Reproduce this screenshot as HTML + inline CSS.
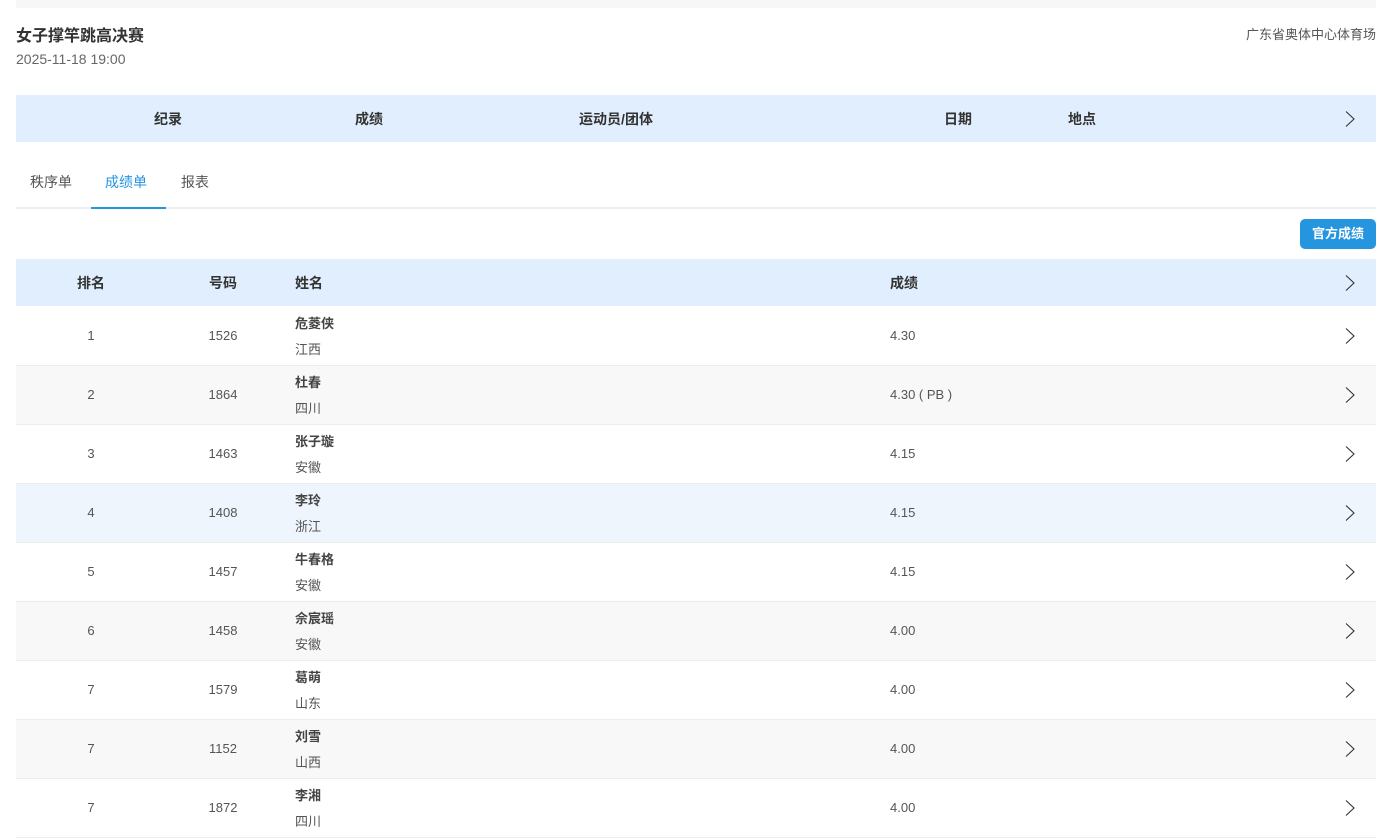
<!DOCTYPE html>
<html><head><meta charset="utf-8"><style>
*{margin:0;padding:0;box-sizing:border-box}
body{width:1392px;height:823px;overflow:hidden;background:#fff;font-family:"Liberation Sans","Noto Sans CJK SC",sans-serif;color:#333;position:relative}
.a{position:absolute}
.chev{position:absolute;left:1343px;width:14px;height:18px}
.hb{font-weight:bold;font-size:14px;color:#333}
.row{position:absolute;left:16px;width:1360px;height:59px;border-bottom:1px solid #ececec;font-size:13px;color:#555}
.c{position:absolute;transform:translateX(-50%)}
</style></head><body>
<div class="a" style="left:16px;top:0;width:1360px;height:8px;background:#f7f7f7"></div>
<div class="a" style="left:16px;top:22px;font-size:16px;font-weight:bold;color:#333">女子撑竿跳高决赛</div>
<div class="a" style="left:16px;top:51px;font-size:14px;color:#666">2025-11-18 19:00</div>
<div class="a" style="right:16px;top:24px;font-size:13px;color:#555">广东省奥体中心体育场</div>
<div class="a" style="left:16px;top:95px;width:1360px;height:47px;background:#e1eefd">
<span class="a c hb" style="left:152px;top:14px">纪录</span>
<span class="a c hb" style="left:353px;top:14px">成绩</span>
<span class="a c hb" style="left:600px;top:14px">运动员/团体</span>
<span class="a c hb" style="left:942px;top:14px">日期</span>
<span class="a c hb" style="left:1066px;top:14px">地点</span>
</div>
<svg class="chev" style="top:110px" viewBox="0 0 14 18"><path d="M3 1.5 L11 9 L3 16.5" fill="none" stroke="#333" stroke-width="1.1"/></svg>
<div class="a" style="left:16px;top:207px;width:1360px;height:2px;background:#ebeef4"></div>
<div class="a" style="left:91px;top:207px;width:75px;height:2px;background:#2695e0"></div>
<div class="a" style="left:30px;top:172px;font-size:14px;color:#555">秩序单</div>
<div class="a" style="left:105px;top:172px;font-size:14px;color:#2695e0">成绩单</div>
<div class="a" style="left:181px;top:172px;font-size:14px;color:#555">报表</div>
<div class="a" style="left:1300px;top:219px;width:76px;height:30px;background:#2695e0;border-radius:5px;color:#fff;font-size:13px;font-weight:bold;text-align:center;line-height:30px">官方成绩</div>
<div class="a" style="left:16px;top:259px;width:1360px;height:47px;background:#e1eefd">
<span class="a c hb" style="left:75px;top:14px">排名</span>
<span class="a c hb" style="left:207px;top:14px">号码</span>
<span class="a hb" style="left:279px;top:14px">姓名</span>
<span class="a hb" style="left:874px;top:14px">成绩</span>
</div>
<svg class="chev" style="top:274px" viewBox="0 0 14 18"><path d="M3 1.5 L11 9 L3 16.5" fill="none" stroke="#333" stroke-width="1.1"/></svg>
<div id="rows"></div>
<script>
var d=[["1","1526","危菱侠","江西","4.30","#fff"],["2","1864","杜春","四川","4.30 ( PB )","#f8f8f8"],["3","1463","张子璇","安徽","4.15","#fff"],["4","1408","李玲","浙江","4.15","#eef5fd"],["5","1457","牛春格","安徽","4.15","#fff"],["6","1458","佘宸瑶","安徽","4.00","#f8f8f8"],["7","1579","葛萌","山东","4.00","#fff"],["7","1152","刘雪","山西","4.00","#f8f8f8"],["7","1872","李湘","四川","4.00","#fff"]];
var h="";d.forEach(function(r,i){var t=307+i*59;h+='<div class="row" style="top:'+t+'px;background:'+r[5]+'"><span class="a c" style="left:75px;top:21px">'+r[0]+'</span><span class="a c" style="left:207px;top:21px">'+r[1]+'</span><span class="a" style="left:279px;top:6px;font-weight:bold;color:#444">'+r[2]+'</span><span class="a" style="left:279px;top:32px">'+r[3]+'</span><span class="a" style="left:874px;top:21px">'+r[4]+'</span></div><svg class="chev" style="top:'+(t+20)+'px" viewBox="0 0 14 18"><path d="M3 1.5 L11 9 L3 16.5" fill="none" stroke="#333" stroke-width="1.1"/></svg>';});
document.getElementById("rows").innerHTML=h;
</script>
</body></html>
